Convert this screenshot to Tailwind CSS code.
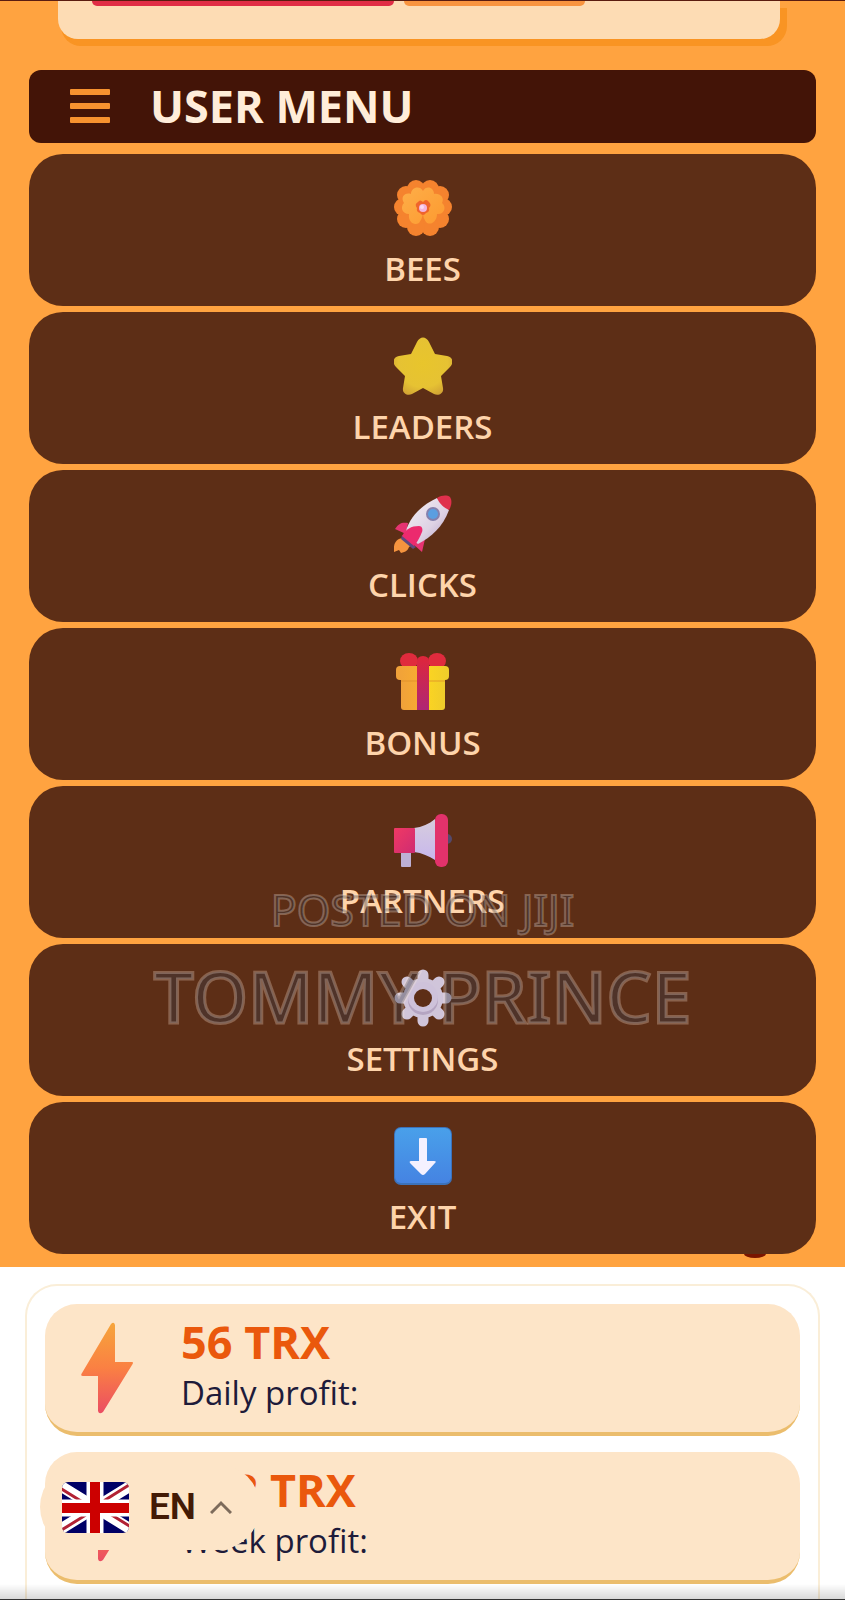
<!DOCTYPE html>
<html lang="en">
<head>
    <meta charset="UTF-8">
    <meta name="viewport" content="width=device-width, initial-scale=1.0">
    <title>User Menu</title>
    <script src="https://cdn.jsdelivr.net/npm/@tailwindcss/browser@4"></script>
</head>
<body class="bg-white font-['Open_Sans','Noto_Sans',sans-serif]">
    <div class="relative flex min-h-screen flex-col overflow-hidden border-t border-[#5a1c10]">

        <!-- User menu -->
        <section class="bg-[#ffa340] pb-[13px]">
            <div class="ml-[58px] mr-[65px] h-[38px] rounded-b-[20px] bg-[#fddcb4] pl-[34px] shadow-[7px_7px_0_0_#f99423,3px_7px_0_0_#f99423]">
                <div class="flex gap-[10px]">
                    <div class="h-[5px] w-[302px] rounded-b-md bg-[#e02d45]"></div>
                    <div class="h-[5px] w-[181px] rounded-b-md bg-[#f9943f]"></div>
                </div>
            </div>

            <div class="mx-[29px] mt-[31px] flex h-[73px] items-center gap-10 rounded-xl bg-[#431407] px-[41px] pb-[2px]">
                <svg class="h-[34px] w-[40px]" viewBox="0 0 40 34" fill="#f7922f">
                    <rect width="40" height="6" rx="1"/>
                    <rect y="14" width="40" height="6" rx="1"/>
                    <rect y="28" width="40" height="6" rx="1"/>
                </svg>
                <h1 class="text-[45px] leading-[56px] font-bold text-[#ffedd9]">USER MENU</h1>
            </div>

            <nav class="relative mx-[29px] mt-[11px] flex flex-col gap-[6px] text-[33px] leading-[44px] font-semibold text-[#fed4ab]">
                <a href="#" class="flex h-[152px] flex-col items-center gap-[10px] rounded-[34px] bg-[#5d2e16] pt-[25px]">
                    <svg class="size-[58px] shrink-0" viewBox="0 0 58 58">
                        <defs>
                            <linearGradient id="petal2" x1="0" y1="0" x2="1" y2="1"><stop offset="0" stop-color="#fdae48"/><stop offset="1" stop-color="#fd9a30"/></linearGradient>
                        </defs>
                        <g fill="#f5832e">
                            <circle cx="29" cy="29" r="24"/>
                            <circle cx="22" cy="10" r="9"/><circle cx="36" cy="10" r="9"/>
                            <circle cx="46" cy="16" r="9"/><circle cx="49" cy="28" r="9"/>
                            <circle cx="46" cy="40" r="9"/><circle cx="36" cy="48" r="9"/>
                            <circle cx="22" cy="48" r="9"/><circle cx="12" cy="40" r="9"/>
                            <circle cx="9" cy="28" r="9"/><circle cx="12" cy="16" r="9"/>
                        </g>
                        <path d="M29 12c3-6 11-4 11 3 6-1 11 4 8 9 5 4 2 12-5 11 0 8-7 12-11 8q-3-4-3-8-1 5-4 9c-5 3-11-1-10-9-7 0-9-7-5-11-4-6 1-11 7-9 0-7 9-9 12-3z" fill="url(#petal2)"/>
                        <path d="M29 23q3-4 6 0 3 3 0 6 1 4-3 5-3 4-6 0-4-1-3-5-3-4 1-6 2-3 5 0z" fill="#f0642b"/>
                        <circle cx="29" cy="29" r="4" fill="#f3b4dc"/>
                        <circle cx="28" cy="28" r="2" fill="#fbd9f2"/>
                    </svg>
                    BEES
                </a>
                <a href="#" class="flex h-[152px] flex-col items-center gap-[10px] rounded-[34px] bg-[#5d2e16] pt-[25px]">
                    <svg class="size-[58px] shrink-0" viewBox="0 0 58 58">
                        <defs><radialGradient id="star" cx=".5" cy=".45" r=".6"><stop offset="0" stop-color="#e8c52c"/><stop offset=".7" stop-color="#e6c233"/><stop offset="1" stop-color="#d2a434"/></radialGradient></defs>
                        <path d="M23 5c3-6 9-6 12 0l6 12 12 2c6 1 7 7 3 11l-9 9 2 12c1 6-5 8-9 6l-11-6-11 6c-4 2-10 0-9-6l2-12-9-9c-4-4-3-10 3-11l12-2z" fill="url(#star)"/>
                    </svg>
                    LEADERS
                </a>
                <a href="#" class="flex h-[152px] flex-col items-center gap-[10px] rounded-[34px] bg-[#5d2e16] pt-[25px]">
                    <svg class="size-[58px] shrink-0" viewBox="0 0 58 58">
                        <defs><linearGradient id="hull" x1="0" y1="0" x2="1" y2="1"><stop offset="0" stop-color="#f5f1f6"/><stop offset=".6" stop-color="#ded2e4"/><stop offset="1" stop-color="#b49fc4"/></linearGradient></defs>
                        <path d="M8 43c-6 1-9 6-8 14l5-2 2 3c5-1 7-3 8-6 3-2 4-4 3-6z" fill="#f5943f"/>
                        <path d="M8 40l14 12-3 2L7 44z" fill="#5d487e"/>
                        <path d="M14 28C8 27 5 28 1 34l11 5zM31 44l-3 13-9-8z" fill="#e63472"/>
                        <path d="M11 40C14 25 24 12 43 3l12 12C49 32 37 42 24 49z" fill="url(#hull)"/>
                        <path d="M43 3c5-3 10-3 13-1 2 3 2 8-1 13-5-2-10-7-12-12z" fill="#e0304c"/>
                        <path d="M8 41c4-7 9-10 17-10 3 0 4 3 3 6-2 5-4 9-8 14z" fill="#ec2a6e"/>
                        <circle cx="39" cy="19" r="7" fill="#8480ad"/><circle cx="39" cy="19" r="5" fill="#5b9ee0"/>
                    </svg>
                    CLICKS
                </a>
                <a href="#" class="flex h-[152px] flex-col items-center gap-[10px] rounded-[34px] bg-[#5d2e16] pt-[25px]">
                    <svg class="size-[58px] shrink-0" viewBox="0 0 58 58">
                        <defs>
                            <linearGradient id="box"><stop offset="0" stop-color="#f0a13a"/><stop offset=".45" stop-color="#f8ac31"/><stop offset=".6" stop-color="#fbd422"/><stop offset="1" stop-color="#efcc2b"/></linearGradient>
                            <linearGradient id="ribbon" x1="0" y1="0" x2="0" y2="1"><stop offset="0" stop-color="#df263a"/><stop offset="1" stop-color="#ae2775"/></linearGradient>
                        </defs>
                        <ellipse cx="15" cy="8" rx="9" ry="8" fill="#e02b3d"/><ellipse cx="43" cy="8" rx="9" ry="8" fill="#e02b3d"/>
                        <path d="M7 25h44v29q0 3-3 3H10q-3 0-3-3z" fill="url(#box)"/>
                        <rect x="2" y="13" width="53" height="14" rx="4" fill="url(#box)"/>
                        <path d="M7 27h44v2H7z" fill="#df8f28" opacity=".4"/>
                        <path d="M23 57V9q0-6 6-6t6 6v48z" fill="url(#ribbon)"/>
                    </svg>
                    BONUS
                </a>
                <a href="#" class="flex h-[152px] flex-col items-center gap-[10px] rounded-[34px] bg-[#5d2e16] pt-[25px]">
                    <svg class="size-[58px] shrink-0" viewBox="0 0 58 58">
                        <defs>
                            <linearGradient id="horn" x1="0" y1="0" x2="0" y2="1"><stop offset="0" stop-color="#d6cddd"/><stop offset="1" stop-color="#c8b7ed"/></linearGradient>
                            <linearGradient id="horn2" x1="0" y1="0" x2="1" y2="1"><stop offset="0" stop-color="#f03964"/><stop offset="1" stop-color="#cf2c72"/></linearGradient>
                        </defs>
                        <circle cx="53" cy="28" r="5" fill="#54496b"/>
                        <rect x="7" y="39" width="10" height="17" rx="1" fill="#bdb0d5"/>
                        <path d="M20 17c8-1 15-4 21-9v41c-6-4-13-7-21-8z" fill="url(#horn)"/>
                        <rect x="0" y="17" width="21" height="25" rx="1" fill="url(#horn2)"/>
                        <rect x="41" y="3" width="13" height="53" rx="6" fill="#e2326b"/>
                    </svg>
                    PARTNERS
                </a>
                <a href="#" class="flex h-[152px] flex-col items-center gap-[10px] rounded-[34px] bg-[#5d2e16] pt-[25px]">
                    <svg class="size-[58px] shrink-0" viewBox="0 0 58 58">
                        <path d="M29 6v46M6 29h46M13 13l32 32M45 13 13 45" stroke="#d0c5da" stroke-width="11" stroke-linecap="round"/>
                        <circle cx="29" cy="29" r="20" fill="#d0c5da"/>
                        <circle cx="29" cy="31" r="15" fill="#b5a5c2"/>
                        <circle cx="29" cy="28" r="15" fill="#cec2da"/>
                        <circle cx="29" cy="29" r="9" fill="#5d2e16"/>
                    </svg>
                    SETTINGS
                </a>
                <span class="absolute right-[50px] -bottom-1 h-2 w-[22px] rounded-[50%] bg-[#7a1500]"></span>
                <a href="#" class="relative flex h-[152px] flex-col items-center gap-[10px] rounded-[34px] bg-[#5d2e16] pt-[25px]">
                    <svg class="size-[58px] shrink-0" viewBox="0 0 58 58">
                        <defs><linearGradient id="exit" x1="0" y1="0" x2="0" y2="1"><stop offset="0" stop-color="#49a0ea"/><stop offset="1" stop-color="#4583e2"/></linearGradient></defs>
                        <rect width="58" height="58" rx="7" fill="#3c72ba"/>
                        <rect x="1" y="1" width="56" height="55" rx="6" fill="url(#exit)"/>
                        <path d="M25 12q0-1 1-1h6q1 0 1 1v22h7q3 0 1 2L31 47q-2 2-4 0L16 36q-1-2 1-2h8z" fill="#f5f1ff"/>
                    </svg>
                    EXIT
                </a>

                <!-- Watermark -->
                <div class="pointer-events-none absolute inset-x-0 top-[716px] text-center font-['Noto_Sans',sans-serif] whitespace-nowrap text-[#3c3c46]/40">
                    <p class="text-[43px] leading-[80px] font-normal [-webkit-text-stroke:2px_rgb(255_235_220/0.28)]">POSTED ON JIJI</p>
                    <p class="text-[71px] leading-[92px] font-medium [-webkit-text-stroke:3px_rgb(255_235_220/0.28)]">TOMMY PRINCE</p>
                </div>
            </nav>
        </section>

        <!-- Profit stats -->
        <main class="mx-[25px] mt-[17px] flex grow flex-col gap-4 rounded-t-[32px] border-2 border-b-0 border-[#faeed8] px-[18px] pt-[18px] pb-[15px]">
            <div class="flex h-[132px] items-center gap-[48px] rounded-[32px] border-b-4 border-[#ebbd6d] bg-[#fde5c8] pl-[36px]">
                <svg class="h-[92px] w-[52px]" viewBox="0 0 52 92">
                    <defs><linearGradient id="bolt" x1="0" y1="0" x2="0" y2="1"><stop offset="0" stop-color="#f6a53b"/><stop offset=".5" stop-color="#fa8043"/><stop offset="1" stop-color="#eb4d63"/></linearGradient></defs>
                    <path d="M30 2q3-3 4 1v37h17q2 0 0 3L22 90q-4 3-5-1V54H2q-3 0-1-3z" fill="url(#bolt)"/>
                </svg>
                <div>
                    <p class="text-[45px] leading-[50px] font-bold text-[#ea580c]">56 TRX</p>
                    <p class="text-[33px] leading-[52px] text-[#1e1b3a]">Daily profit:</p>
                </div>
            </div>
            <div class="flex h-[132px] items-center gap-[48px] rounded-[32px] border-b-4 border-[#ebbd6d] bg-[#fde5c8] pl-[36px]">
                <svg class="h-[92px] w-[52px]" viewBox="0 0 52 92">
                    <path d="M30 2q3-3 4 1v37h17q2 0 0 3L22 90q-4 3-5-1V54H2q-3 0-1-3z" fill="url(#bolt)"/>
                </svg>
                <div>
                    <p class="text-[45px] leading-[50px] font-bold text-[#ea580c]">392 TRX</p>
                    <p class="text-[33px] leading-[52px] text-[#1e1b3a]">Week profit:</p>
                </div>
            </div>
        </main>
    </div>

    <!-- Language switcher -->
    <button type="button" class="fixed bottom-[50px] left-10 flex h-[86px] w-[220px] items-center rounded-full bg-[#fde5c8] pl-[22px] text-[#431a05]">
        <svg class="h-[51px] w-[67px] rounded-md" viewBox="0 0 67 51">
            <path d="M0 0h67v51H0z" fill="#000066"/>
            <path d="M-3 3 70 48M70 3-3 48" stroke="#fff" stroke-width="11"/>
            <path d="M-2 6 27 24M67 3 40 20M27 31-2 49M40 27l29 18" stroke="#b22234" stroke-width="3"/>
            <path d="M33 0v51M0 26h67" stroke="#fff" stroke-width="17"/>
            <path d="M33 0v51M0 26h67" stroke="#c00" stroke-width="10"/>
        </svg>
        <span class="ml-5 font-[Roboto,sans-serif] text-[37px] leading-[44px] font-semibold">EN</span>
        <svg class="ml-[14px] h-[14px] w-[22px]" viewBox="0 0 22 14" fill="none" stroke="#7d6b5b" stroke-width="3"><path d="M1 13 11 3l10 10"/></svg>
    </button>

    <div class="pointer-events-none fixed inset-x-0 bottom-0 h-4 border-b border-[#333] bg-linear-to-b from-transparent to-black/15"></div>
</body>
</html>
